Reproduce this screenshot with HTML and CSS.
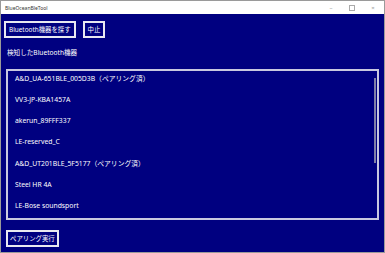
FILE: index.html
```html
<!DOCTYPE html>
<html lang="ja">
<head>
  <meta charset="UTF-8">
  <title>BlueOceanBleTool</title>
  <link rel="stylesheet" href="styles.css">
</head>
<body>
  <div class="window">
    <div class="titlebar">
      <span class="title">BlueOceanBleTool</span>
      <div class="controls">
        <span class="ctl">&#8211;</span>
        <span class="ctl box"></span>
        <span class="ctl">&#215;</span>
      </div>
    </div>

    <div class="content">
      <div class="toolbar">
        <button class="btn">Bluetooth機器を探す</button>
        <button class="btn">中止</button>
      </div>
      <div class="label">検知したBluetooth機器</div>
      <div class="list">
        <div class="item">A&amp;D_UA-651BLE_005D3B（ペアリング済）</div>
        <div class="item">VV3-JP-KBA1457A</div>
        <div class="item">akerun_89FFF337</div>
        <div class="item">LE-reserved_C</div>
        <div class="item">A&amp;D_UT201BLE_5F5177（ペアリング済）</div>
        <div class="item">Steel HR 4A</div>
        <div class="item">LE-Bose soundsport</div>
        <div class="scrollbar"></div>
      </div>
      <button class="btn pair">ペアリング実行</button>
    </div>
  </div>
</body>
</html>
```

FILE: styles.css
```css
body {
  margin: 0;
  font-family: "Noto Sans", "Noto Sans CJK JP", sans-serif;
  background: #fff;
}
.window {
  width: 385px;
  height: 253px;
  box-sizing: border-box;
  border: 1px solid #9a9a9a;
  display: flex;
  flex-direction: column;
}
.titlebar {
  height: 13px;
  background: #fff;
  display: flex;
  align-items: center;
  justify-content: space-between;
}
.title {
  font-size: 5px;
  color: #333;
  padding-left: 4px;
}
.controls {
  display: flex;
  align-items: center;
  padding-right: 1px;
}
.ctl {
  width: 20px;
  text-align: center;
  font-size: 6px;
  color: #999;
  line-height: 10px;
}
.ctl.box {
  width: 4px;
  height: 4px;
  border: 1px solid #aaa;
  margin: 0 8px;
}
.content {
  flex: 1;
  background: #000080;
  padding: 7px 5px 0 3px;
  color: #fff;
}
.toolbar {
  display: flex;
  gap: 7px;
}
.btn {
  height: 17px;
  padding: 0 3px;
  background: #000080;
  border: 2px solid #e8e8f0;
  color: #fff;
  font-family: inherit;
  font-size: 6.4px;
  line-height: 13px;
}
.label {
  font-size: 6.6px;
  margin: 9px 0 0 3px;
  line-height: 12px;
}
.list {
  position: relative;
  margin: 10px 0 0 2px;
  height: 151px;
  box-sizing: border-box;
  border: 2px solid #c8c8e0;
  overflow: hidden;
}
.item {
  font-size: 6.8px;
  line-height: 16px;
  height: 21.15px;
  padding-left: 7px;
}
.scrollbar {
  position: absolute;
  right: 1px;
  top: 7px;
  width: 2px;
  height: 85px;
  background: #8080a8;
}
.pair {
  margin: 10px 0 0 2px;
  padding: 0 2px;
}
```
